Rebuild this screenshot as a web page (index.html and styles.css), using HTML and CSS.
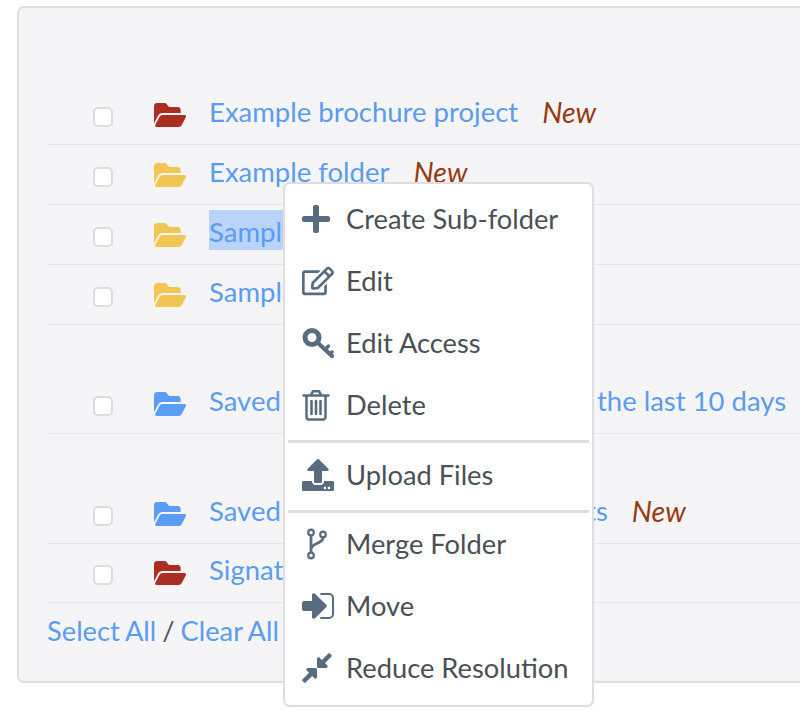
FILE: index.html
```html
<!DOCTYPE html>
<html lang="en">
<head>
<meta charset="utf-8">
<title>Folders</title>
<link rel="stylesheet" href="styles.css">
</head>
<body>
<svg class="defs" aria-hidden="true">
  <symbol id="folder" viewBox="0 0 576 512" preserveAspectRatio="none"><path fill="currentColor" d="M572.694 292.093L500.27 416.248A63.997 63.997 0 0 1 444.989 448H45.025c-18.523 0-30.064-20.093-20.731-36.093l72.424-124.155A64 64 0 0 1 152 256h399.964c18.523 0 30.064 20.093 20.73 36.093zM152 224h328v-48c0-26.51-21.49-48-48-48H272l-64-64H48C21.49 64 0 85.49 0 112v278.046l69.077-118.418C86.214 242.25 117.989 224 152 224z"/></symbol>
</svg>
<main class="panel">
  <ul class="list">
    <li class="row">
      <input class="check" type="checkbox"><svg class="folder red"><use href="#folder"/></svg>
      <a class="link">Example brochure project</a><em class="new">New</em>
    </li>
    <li class="row">
      <input class="check" type="checkbox"><svg class="folder yellow"><use href="#folder"/></svg>
      <a class="link">Example folder</a><em class="new">New</em>
    </li>
    <li class="row">
      <input class="check" type="checkbox"><svg class="folder yellow"><use href="#folder"/></svg>
      <a class="link selected">Sample folder</a>
    </li>
    <li class="row">
      <input class="check" type="checkbox"><svg class="folder yellow"><use href="#folder"/></svg>
      <a class="link">Sample project</a>
    </li>
    <li class="row tall">
      <input class="check" type="checkbox"><svg class="folder blue"><use href="#folder"/></svg>
      <a class="link">Saved searches of files added in the last 10 days</a>
    </li>
    <li class="row taller">
      <input class="check" type="checkbox"><svg class="folder blue"><use href="#folder"/></svg>
      <a class="link">Saved searches for all documents</a><em class="new">New</em>
    </li>
    <li class="row short">
      <input class="check" type="checkbox"><svg class="folder red"><use href="#folder"/></svg>
      <a class="link">Signature documents</a>
    </li>
  </ul>
  <p class="footer"><a class="link">Select All</a> / <a class="link">Clear All</a></p>
</main>

<nav class="menu">
  <div class="item">
    <span class="icon"><svg width="28" height="32" viewBox="0 0 448 512"><path fill="currentColor" d="M416 208H272V64c0-17.67-14.33-32-32-32h-32c-17.67 0-32 14.33-32 32v144H32c-17.67 0-32 14.33-32 32v32c0 17.67 14.33 32 32 32h144v144c0 17.67 14.33 32 32 32h32c17.67 0 32-14.33 32-32V304h144c17.67 0 32-14.33 32-32v-32c0-17.67-14.33-32-32-32z"/></svg></span>Create Sub-folder
  </div>
  <div class="item">
    <span class="icon"><svg width="36" height="32" viewBox="0 0 576 512"><path fill="currentColor" d="M402.3 344.9l32-32c5-5 13.7-1.5 13.7 5.7V464c0 26.5-21.5 48-48 48H48c-26.5 0-48-21.5-48-48V112c0-26.5 21.5-48 48-48h273.5c7.1 0 10.7 8.6 5.7 13.7l-32 32c-1.5 1.5-3.5 2.3-5.7 2.3H48v352h352V350.5c0-2.1.8-4.1 2.3-5.6zm156.6-201.8L296.3 405.7l-90.4 10c-26.2 2.9-48.5-19.2-45.6-45.6l10-90.4L432.9 17.1c22.9-22.9 59.9-22.9 82.7 0l43.2 43.2c22.9 22.9 22.9 60 .1 82.8zM460.1 174L402 115.9 216.2 301.8l-7.3 65.3 65.3-7.3L460.1 174zm64.8-79.7l-43.2-43.2c-4.1-4.1-10.8-4.1-14.8 0L436 82l58.1 58.1 30.9-30.9c4-4.2 4-10.8-.1-14.9z"/></svg></span>Edit
  </div>
  <div class="item">
    <span class="icon"><svg width="32" height="32" viewBox="0 0 32 32"><g fill="none" stroke="currentColor" stroke-linecap="round"><circle cx="10" cy="10.500" r="7" stroke-width="5"/><path stroke-width="4.200" d="M16 16L30 29"/><path stroke-width="3.500" d="M23 22.500l3.500-3.500M28 27l2-2"/></g></svg></span>Edit Access
  </div>
  <div class="item">
    <span class="icon"><svg width="28" height="32" viewBox="0 0 28 32"><g fill="none" stroke="currentColor" stroke-width="2.500" stroke-linecap="round" stroke-linejoin="round"><path d="M1.500 6.500h25M9 6l2-3.800h6L19 6M4.500 7v21a2.500 2.500 0 0 0 2.500 2.500h14a2.500 2.500 0 0 0 2.500-2.500V7"/><path stroke-width="2.600" d="M9.500 12v13M14 12v13M18.500 12v13"/></g></svg></span>Delete
  </div>
  <hr class="rule">
  <div class="item">
    <span class="icon"><svg width="32" height="32" viewBox="0 0 512 512"><path fill="currentColor" d="M296 384h-80c-13.300 0-24-10.700-24-24V192h-87.700c-17.800 0-26.700-21.500-14.100-34.100L242.300 5.700c7.500-7.500 19.800-7.500 27.300 0l152.200 152.200c12.600 12.600 3.700 34.100-14.100 34.100H320v168c0 13.300-10.700 24-24 24zm216-8v112c0 13.300-10.700 24-24 24H24c-13.300 0-24-10.700-24-24V376c0-13.300 10.700-24 24-24h136v8c0 30.900 25.100 56 56 56h80c30.900 0 56-25.100 56-56v-8h136c13.300 0 24 10.700 24 24zm-124 88c0-11-9-20-20-20s-20 9-20 20 9 20 20 20 20-9 20-20zm64 0c0-11-9-20-20-20s-20 9-20 20 9 20 20 20 20-9 20-20z"/></svg></span>Upload Files
  </div>
  <hr class="rule">
  <div class="item">
    <span class="icon"><svg width="32" height="32" viewBox="0 0 32 32"><g fill="none" stroke="currentColor" stroke-width="2.200"><circle cx="9" cy="4.500" r="2.800"/><circle cx="9" cy="27.500" r="2.800"/><circle cx="21" cy="6.500" r="2.800"/><path stroke-width="2.800" d="M9 7.500v17M21 9.500c0 7-12 5-12 12"/></g></svg></span>Merge Folder
  </div>
  <div class="item">
    <span class="icon"><svg width="32" height="26" viewBox="0 0 32 26"><path fill="currentColor" d="M0 10a2 2 0 0 1 2-2h8V2c0-1.600 1.800-2.300 3-1.200l11 10.700a2 2 0 0 1 0 3L13 25.200c-1.200 1.100-3 .4-3-1.200v-6H2a2 2 0 0 1-2-2z"/><path fill="none" stroke="currentColor" stroke-width="2" stroke-linecap="round" d="M19 1h8a4 4 0 0 1 4 4v16a4 4 0 0 1-4 4h-8"/></svg></span>Move
  </div>
  <div class="item">
    <span class="icon"><svg width="30" height="34" viewBox="0 0 448 512"><path fill="currentColor" d="M4.686 427.314L104 328l-32.922-31.029C55.958 281.851 66.666 256 88.048 256h112C213.303 256 224 266.745 224 280v112c0 21.382-25.803 32.090-40.922 16.971L152 376l-99.314 99.314c-6.248 6.248-16.379 6.248-22.627 0L4.686 449.941c-6.248-6.248-6.248-16.379 0-22.627zM443.314 84.686L344 184l32.922 31.029c15.120 15.120 4.412 40.971-16.970 40.971h-112C234.697 256 224 245.255 224 232V120c0-21.382 25.803-32.090 40.922-16.971L296 136l99.314-99.314c6.248-6.248 16.379-6.248 22.627 0l25.373 25.373c6.248 6.248 6.248 16.379 0 22.627z"/></svg></span>Reduce Resolution
  </div>
</nav>
</body>
</html>
```

FILE: styles.css
```css
html, body {
  margin: 0;
  padding: 0;
  height: 722px;
  overflow: hidden;
  background: #fff;
}

body {
  position: relative;
  font-family: Lato, "Open Sans", sans-serif;
  font-size: 27.3px;
  line-height: 40px;
  color: #4a5056;
}

.defs {
  display: none;
}

.panel {
  box-sizing: border-box;
  width: 783px;
  height: 677px;
  margin: 6px 0 0 17px;
  padding: 77px 0 0 29px;
  background: #f5f5f8;
  border: 2px solid #dedee0;
  border-right: 0;
  border-radius: 7px 0 0 7px;
}

.list {
  list-style: none;
  margin: 0;
  padding: 0;
}

.row {
  display: flex;
  align-items: flex-start;
  padding: 7px 0 12px 45px;
  border-bottom: 1px solid #e6e6e9;
  font-size: 27.5px;
  white-space: nowrap;
}

.tall {
  padding-top: 56px;
}

.taller {
  padding-top: 57px;
}

.short {
  padding-top: 6px;
}

.check {
  appearance: none;
  box-sizing: border-box;
  flex: none;
  width: 20px;
  height: 20px;
  margin: 15px 41px 0 0;
  background: #fff;
  border: 2px solid #dcdcdf;
  border-radius: 5px;
}

.folder {
  flex: none;
  width: 32px;
  height: 32px;
  margin: 7px 23px 0 0;
}

.red { color: #ac2e23; }
.yellow { color: #f1c653; }
.blue { color: #5b9cf4; }

.link {
  color: #5b9cf2;
}

.selected {
  display: inline-block;
  height: 40px;
  margin: -2px 0 2px;
  line-height: 44px;
  background: #b9d3fb;
}

.new {
  margin-left: 24px;
  color: #983a10;
  font-size: 28.5px;
  font-style: italic;
}

.footer {
  margin: 0 0 0 -1px;
  padding-top: 8px;
  word-spacing: -1px;
}

.menu {
  position: absolute;
  left: 283px;
  top: 182px;
  box-sizing: border-box;
  width: 311px;
  height: 525px;
  padding-top: 4px;
  background: #fff;
  border: 2px solid #dedee0;
  border-radius: 7px;
}

.item {
  display: flex;
  align-items: center;
  height: 62px;
  padding-left: 17px;
  white-space: nowrap;
}

.icon {
  display: flex;
  flex: none;
  align-items: center;
  justify-content: flex-start;
  width: 32px;
  margin-right: 12px;
  color: #586c80;
}

.rule {
  height: 3px;
  margin: 4px 3px 0.5px;
  background: #dfdfdf;
  border: 0;
}
```
